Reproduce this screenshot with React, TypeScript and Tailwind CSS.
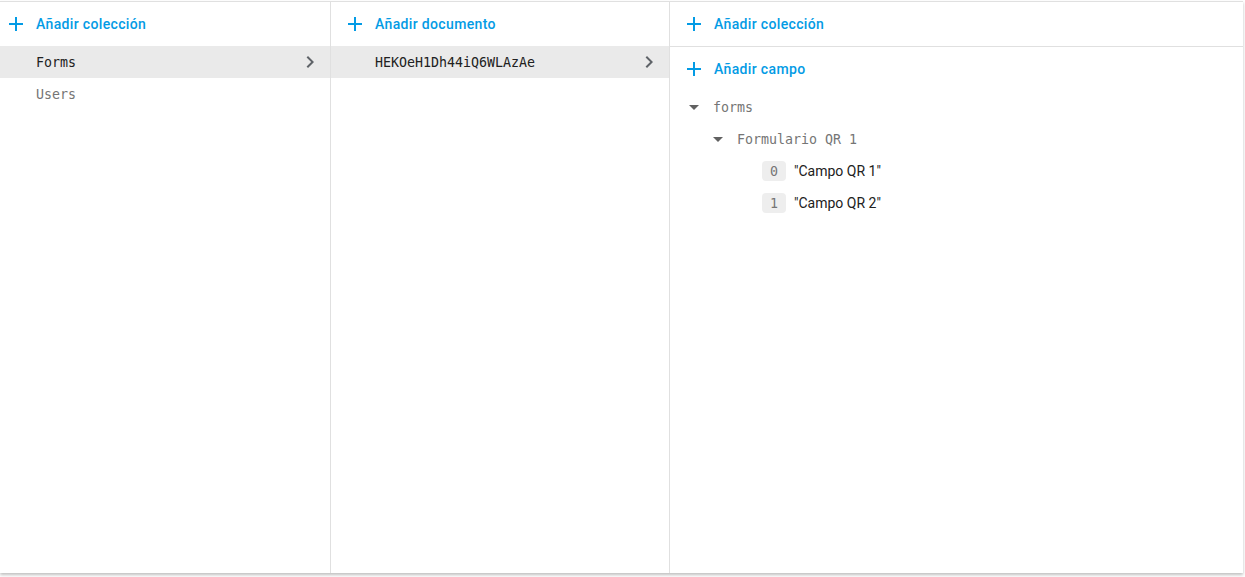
import React from "react";

const MONO = "font-['DejaVu_Sans_Mono',monospace] text-[13.3px]";

function PlusIcon() {
  return (
    <svg width="24" height="24" viewBox="0 0 24 24" className="shrink-0 fill-[#039be5]">
      <path d="M19 13h-6v6h-2v-6H5v-2h6V5h2v6h6v2z" />
    </svg>
  );
}

function Chevron() {
  return (
    <svg width="24" height="24" viewBox="0 0 24 24" className="shrink-0 fill-[#5f6368]">
      <path d="M10 6L8.59 7.41 13.17 12l-4.58 4.59L10 18l6-6z" />
    </svg>
  );
}

function Caret() {
  return (
    <svg width="24" height="24" viewBox="0 0 24 24" className="shrink-0 fill-[#616161]">
      <path d="M7 10l5 5 5-5z" />
    </svg>
  );
}

function AddButton({ label, className = "" }: { label: string; className?: string }) {
  return (
    <div className={`flex items-center gap-2 ${className}`}>
      <PlusIcon />
      <span className="text-sm font-medium tracking-[0.35px] text-[#039be5]">{label}</span>
    </div>
  );
}

function ListRow({ label, selected }: { label: string; selected?: boolean }) {
  return (
    <div
      className={`flex h-8 items-center justify-between pl-9 pr-2 ${MONO} ${
        selected ? "bg-[#eaeaea] text-[#212121]" : "text-[#757575]"
      }`}
    >
      <span className="pt-[2px]">{label}</span>
      {selected && <Chevron />}
    </div>
  );
}

export default function App() {
  return (
    <div className="h-[577px] w-[1245px] overflow-hidden bg-white pt-px font-['Roboto',sans-serif]">
      <div className="flex h-[572px] w-[1243px] border-t border-[#e0e0e0] bg-white shadow-[0_2px_3px_rgba(0,0,0,0.25)]">
        <div className="flex w-[331px] shrink-0 flex-col border-r border-[#e0e0e0]">
          <AddButton label="Añadir colección" className="h-[44px] pl-1" />
          <ListRow label="Forms" selected />
          <ListRow label="Users" />
        </div>

        <div className="flex w-[339px] shrink-0 flex-col border-r border-[#e0e0e0]">
          <AddButton label="Añadir documento" className="h-[44px] pl-[12px]" />
          <div className={`flex h-8 items-center justify-between bg-[#eaeaea] pl-[44px] pr-2 text-[#212121] ${MONO}`}>
            <span className="pt-[2px]">HEKOeH1Dh44iQ6WLAzAe</span>
            <Chevron />
          </div>
        </div>

        <div className="flex flex-1 flex-col">
          <AddButton label="Añadir colección" className="h-[45px] border-b border-[#e0e0e0] pl-[12px]" />
          <AddButton label="Añadir campo" className="h-[44px] pl-[12px]" />
          <div className={`flex h-8 items-center gap-[7px] pl-[12px] text-[#757575] ${MONO}`}>
            <Caret />
            <span className="pt-[2px]">forms</span>
          </div>
          <div className={`flex h-8 items-center gap-[7px] pl-[36px] text-[#757575] ${MONO}`}>
            <Caret />
            <span className="pt-[2px]">Formulario QR 1</span>
          </div>
          {["Campo QR 1", "Campo QR 2"].map((v, i) => (
            <div key={i} className="flex h-8 items-center gap-2 pl-[92px]">
              <span
                className={`flex h-5 w-6 items-center justify-center rounded-sm bg-[#eeeeee] pt-px text-[#757575] ${MONO}`}
              >
                {i}
              </span>
              <span className="text-sm text-[#212121]">"{v}"</span>
            </div>
          ))}
        </div>
      </div>
    </div>
  );
}
